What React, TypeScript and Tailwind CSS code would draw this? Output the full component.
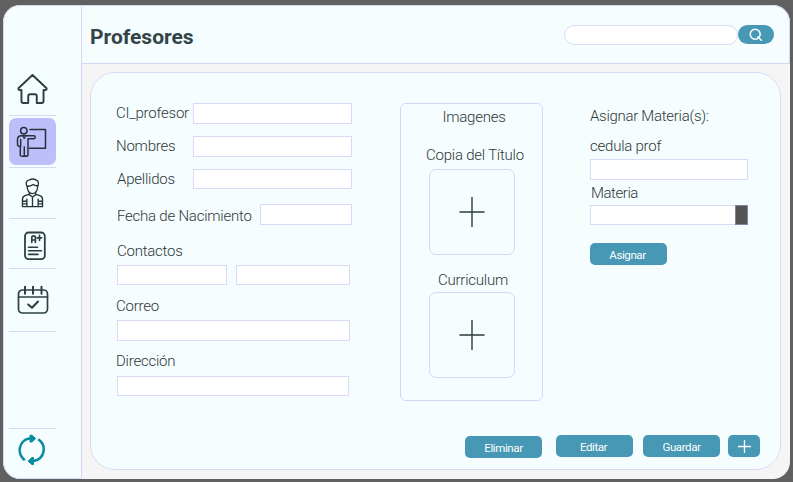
import type { ReactNode } from "react";

function Label({ className = "", children }: { className?: string; children: ReactNode }) {
  return (
    <span
      className={`block shrink-0 whitespace-nowrap text-[15px] leading-5 font-light tracking-[-0.23px] text-[#303838] ${className}`}
    >
      {children}
    </span>
  );
}

function Field({ className = "" }: { className?: string }) {
  return <input className={`block shrink-0 border border-[#d8daf8] bg-white outline-none ${className}`} />;
}

function Button({ className = "", children }: { className?: string; children: ReactNode }) {
  return (
    <button
      className={`flex h-[22px] shrink-0 items-center justify-center rounded-[5px] bg-[#4698b4] pt-px text-[11.5px] leading-4 font-normal tracking-[-0.4px] text-white ${className}`}
    >
      {children}
    </button>
  );
}

function UploadBox({ className = "" }: { className?: string }) {
  return (
    <button
      className={`flex h-[86px] w-[86px] shrink-0 items-center justify-center rounded-[7px] border border-[#d4d7f6] ${className}`}
    >
      <svg width="26" height="30" viewBox="0 0 26 30" stroke="#2d3b3d" strokeWidth="1.400">
        <path d="M13 0v30M0.500 15h25" />
      </svg>
    </button>
  );
}

function HomeIcon() {
  return (
    <svg width="31" height="32" viewBox="0 0 32 32" fill="none" stroke="#2c3f43" strokeWidth="2" strokeLinejoin="round" strokeLinecap="round">
      <path d="M16 1.500 1.500 15.200c-.4 1.300.3 1.800 1.400 1.800h1.700v11.500c0 1.200.6 1.900 1.800 1.900h5.200v-7c0-1.200.7-1.900 1.900-1.900h5c1.200 0 1.900.7 1.900 1.900v7h5.200c1.200 0 1.800-.7 1.800-1.900V17h1.700c1.100 0 1.800-.5 1.400-1.800L16 1.500Z" />
    </svg>
  );
}

function TeacherIcon() {
  return (
    <svg width="32" height="32" viewBox="0 0 32 32" fill="none" stroke="#26313d" strokeWidth="1.500" strokeLinejoin="round" strokeLinecap="round">
      <circle cx="7.800" cy="4.800" r="3.200" />
      <path d="M14 3.600h15.500v18.700H13.500" />
      <path d="M4.300 29.200V20.500c-1.900 0-2.800-.8-2.800-2.300v-4.800c0-2.400 1.500-3.700 4.200-3.700h12.100c1.900 0 1.900 3 0 3H12v16.500c0 1.300-3.700 1.300-3.700 0V21v8.200c0 1.300-4 1.300-4 0ZM4.700 13.500v7" />
      <path d="m7 10 1.200 2.500 1.400-2.500" strokeWidth="1.200" />
    </svg>
  );
}

function StudentIcon() {
  return (
    <svg width="23" height="30" viewBox="0 0 24 32" fill="none" stroke="#263438" strokeWidth="1.450" strokeLinejoin="round" strokeLinecap="round">
      <path d="M6.300 9.500C4.300 5.500 5.200 2.300 9 2c2-1.400 5.500-1.200 7.500.6 2.200.7 2.300 3.900.9 6.800M6.500 8.700c2.400.2 4.600-.2 6.200-1.700 1.300 1 2.900 1.300 4.700 1.200M6.500 8.700c-.5 4.400 2.100 8 5.400 8s6-3.600 5.500-8" />
      <path d="M8.500 15.700v2l3.500 2.600 3.500-2.600v-2M8.500 17.400 4 18.800c-2 .7-2.700 2-2.700 4v7.700h21.400v-7.700c0-2-.7-3.300-2.700-4l-4.500-1.400M12 20.500v10M6 22.500v8M18 22.500v8M1.300 24.800H6M1.300 27.600H6M18 24.800h4.700M18 27.600h4.700" />
    </svg>
  );
}

function GradesIcon() {
  return (
    <svg width="22" height="30" viewBox="0 0 22 30" fill="none" stroke="#2c3f43" strokeWidth="1.800" strokeLinejoin="round" strokeLinecap="round">
      <rect x="1" y="1.500" width="19.800" height="26.600" rx="3.500" />
      <path d="M7.800 11.300V6.600c0-2.300 3.600-2.300 3.600 0v4.700M7.800 9h3.600M15.500 4.300v5M13.300 6.800h4.300" strokeWidth="1.700" />
      <path d="M4.500 16.300h9M4.500 19.800h13M4.500 23.400h9.500" strokeWidth="1.600" />
    </svg>
  );
}

function CalendarIcon() {
  return (
    <svg width="32" height="30" viewBox="0 0 32 30" fill="none" stroke="#2c3f43" strokeWidth="1.700" strokeLinejoin="round" strokeLinecap="round">
      <rect x="1.500" y="5" width="29" height="23" rx="4" />
      <path d="M1.500 12h29" />
      <path d="M8 1.800v7M16 1.800v7M24.500 1.800v7" strokeWidth="2" />
      <path d="m11.200 19.500 3.800 3.300 6-6.300" strokeWidth="2.100" />
    </svg>
  );
}

function RefreshIcon() {
  return (
    <svg width="28" height="32" viewBox="0 0 28 32" fill="none" stroke="#078da0" strokeWidth="2.500">
      <path d="M6.800 26.200C-1.500 19.500 0.500 6.500 12 4.300M20.300 5.200C29 11.500 27 24.500 16 27" />
      <path d="M12 1.200h2L17.700 4.600 14 8H12ZM15.500 23.600h-1.700L10 27.200l3.800 3.300h1.700Z" fill="#078da0" strokeWidth="1" strokeLinejoin="round" />
    </svg>
  );
}

function NavItem({ className = "", children }: { className?: string; children: ReactNode }) {
  return (
    <div className={`flex w-[47px] shrink-0 items-center justify-center border-[#d5d9f4] ${className}`}>{children}</div>
  );
}

export default function App() {
  return (
    <div className="h-[482px] w-[793px] bg-[#606060] pt-[5px] pl-[3px] font-['Roboto','Liberation_Sans',sans-serif]">
      <div className="flex h-[474px] w-[787px] overflow-hidden rounded-[17px] bg-[#f5f5f5]">
        <aside className="flex w-[79px] shrink-0 flex-col rounded-l-[17px] border border-[#d5d8f5] bg-[#f5fdff] pl-[5px]">
          <NavItem className="mt-[56px] h-[54px] border-b">
            <HomeIcon />
          </NavItem>
          <NavItem className="mt-[2px] h-[47px] rounded-[7px] bg-[#bdbffa] pr-px">
            <TeacherIcon />
          </NavItem>
          <NavItem className="mt-[2px] h-[52px] border-t border-b">
            <StudentIcon />
          </NavItem>
          <NavItem className="h-[50px] border-b pt-[5px] pl-[5px]">
            <GradesIcon />
          </NavItem>
          <NavItem className="h-[63px] border-b pl-px">
            <CalendarIcon />
          </NavItem>
          <NavItem className="mt-auto h-[50px] border-t pr-px pb-[7px]">
            <RefreshIcon />
          </NavItem>
        </aside>
        <div className="flex min-w-0 flex-1 flex-col">
          <header className="flex h-[59px] shrink-0 items-center rounded-tr-[17px] border-t border-r border-b border-[#d5d8f5] bg-[#f5fdff] pr-[15px] pl-[8px]">
            <h1 className="mt-[4px] text-[21px] leading-6 font-bold text-[#334448]">Profesores</h1>
            <input className="ml-auto h-[20px] w-[174px] rounded-full border border-[#dadcf8] bg-white outline-none" />
            <button className="flex h-[19px] w-[36px] items-center justify-center rounded-full bg-[#4698b4]">
              <svg width="14" height="14" viewBox="0 0 14 14" fill="none" stroke="white" strokeWidth="1.500">
                <circle cx="6.200" cy="6.200" r="5" />
                <path d="m8.500 8.500 4.300 4.300" />
              </svg>
            </button>
          </header>
          <main className="mt-[8px] ml-[8px] flex h-[398px] w-[691px] flex-col rounded-[25px] border border-[#d8dbf8] bg-[#f5fdff] pt-[30px] pl-[25px]">
            <div className="flex h-[332px]">
              <section className="w-[284px] shrink-0">
                <div className="flex items-center">
                  <Label className="h-[21px] w-[77px]">CI_profesor</Label>
                  <Field className="h-[21px] w-[159px]" />
                </div>
                <div className="mt-[12px] flex items-center">
                  <Label className="h-[21px] w-[77px]">Nombres</Label>
                  <Field className="h-[21px] w-[159px]" />
                </div>
                <div className="mt-[12px] flex items-center">
                  <Label className="w-[77px] pl-px">Apellidos</Label>
                  <Field className="h-[20px] w-[159px]" />
                </div>
                <div className="mt-[15px] flex items-start">
                  <Label className="h-[21px] w-[144px] pt-[2px] pl-px">Fecha de Nacimiento</Label>
                  <Field className="h-[21px] w-[92px]" />
                </div>
                <Label className="mt-[16px] pl-px">Contactos</Label>
                <div className="mt-[4px] flex gap-[9px] pl-px">
                  <Field className="h-[20px] w-[110px]" />
                  <Field className="h-[20px] w-[114px]" />
                </div>
                <Label className="mt-[11px]">Correo</Label>
                <Field className="mt-[4px] ml-px h-[21px] w-[233px]" />
                <Label className="mt-[10px]">Dirección</Label>
                <Field className="mt-[5px] ml-px h-[20px] w-[232px]" />
              </section>
              <section className="flex h-[298px] w-[143px] shrink-0 flex-col items-center rounded-[6px] border border-[#d4d7f6]">
                <Label className="mt-[3px] pl-[5px]">Imagenes</Label>
                <Label className="mt-[18px] pl-[7px]">Copia del Título</Label>
                <UploadBox className="mt-[4px]" />
                <Label className="mt-[15px] pl-[3px]">Curriculum</Label>
                <UploadBox className="mt-[2px]" />
              </section>
              <section className="ml-[47px]">
                <Label className="mt-[3px] tracking-[-0.29px]">Asignar Materia(s):</Label>
                <Label className="mt-[10px]">cedula prof</Label>
                <Field className="mt-[3px] h-[21px] w-[158px]" />
                <Label className="mt-[3px] pl-px tracking-[-0.45px]">Materia</Label>
                <div className="mt-[2px] flex">
                  <Field className="h-[20px] w-[145px] border-r-0" />
                  <button className="h-[20px] w-[13px] border border-[#8582a0] bg-[#555555]" />
                </div>
                <Button className="mt-[18px] w-[77px] pr-[2px]">Asignar</Button>
              </section>
            </div>
            <footer className="flex pl-[349px]">
              <Button className="mt-px w-[77px]">Eliminar</Button>
              <Button className="ml-[14px] w-[77px] pr-[2px]">Editar</Button>
              <Button className="ml-[10px] w-[77px]">Guardar</Button>
              <Button className="ml-[8px] w-[32px]">
                <svg width="13" height="13" viewBox="0 0 13 13" stroke="white" strokeWidth="1.300">
                  <path d="M6.500 0v13M0 6.500h13" />
                </svg>
              </Button>
            </footer>
          </main>
        </div>
      </div>
    </div>
  );
}
